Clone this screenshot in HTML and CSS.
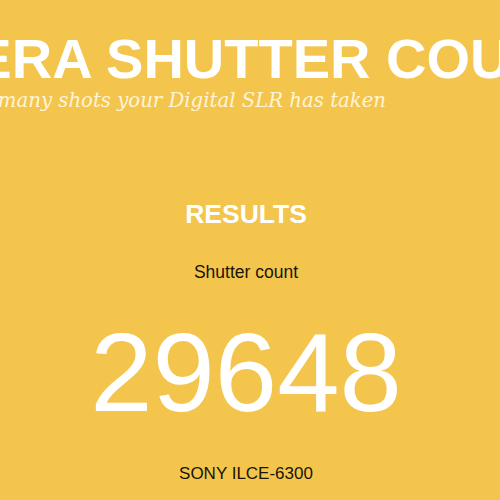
FILE: index.html
```html
<!DOCTYPE html>
<html lang="en">
<head>
<meta charset="utf-8">
<title>Camera Shutter Count</title>
<link rel="stylesheet" href="styles.css">
</head>
<body>
<div class="page">
  <header class="header">
    <h1 class="title">CAMERA SHUTTER COUNT</h1>
    <p class="tagline">Find out how many shots your Digital SLR has taken</p>
  </header>
  <section class="results">
    <h2 class="results-title">RESULTS</h2>
    <p class="label">Shutter count</p>
    <p class="count">29648</p>
    <p class="model">SONY ILCE-6300</p>
  </section>
</div>
</body>
</html>
```

FILE: styles.css
```css
html, body {
  margin: 0;
  padding: 0;
  background: #f4c54c;
  overflow: hidden;
  height: 100%;
}
.page {
  width: 500px;
  height: 500px;
  overflow: hidden;
  font-family: "Liberation Sans", Arial, sans-serif;
}
.header {
  width: 1000px;
  margin-left: -284px;
}
.title {
  margin: 31px 0 0 0;
  font-size: 56px;
  line-height: 56px;
  font-weight: bold;
  color: #ffffff;
  text-align: center;
  white-space: nowrap;
}
.tagline {
  margin: 2px 0 0 144px;
  font-family: "DejaVu Serif", Georgia, serif;
  font-style: italic;
  font-size: 19.7px;
  line-height: 24px;
  color: #fff4d8;
  white-space: nowrap;
}
.results {
  width: 492px;
  text-align: center;
}
.results-title {
  margin: 86px 0 0 0;
  font-size: 26.5px;
  line-height: 30px;
  font-weight: bold;
  color: #ffffff;
}
.label {
  margin: 33px 0 0 0;
  font-size: 17.5px;
  line-height: 20px;
  color: #1a1408;
}
.count {
  margin: 35px 0 0 0;
  font-size: 112px;
  line-height: 112px;
  color: #ffffff;
}
.model {
  margin: 35px 0 0 0;
  font-size: 17px;
  line-height: 20px;
  color: #1a1408;
}
```
